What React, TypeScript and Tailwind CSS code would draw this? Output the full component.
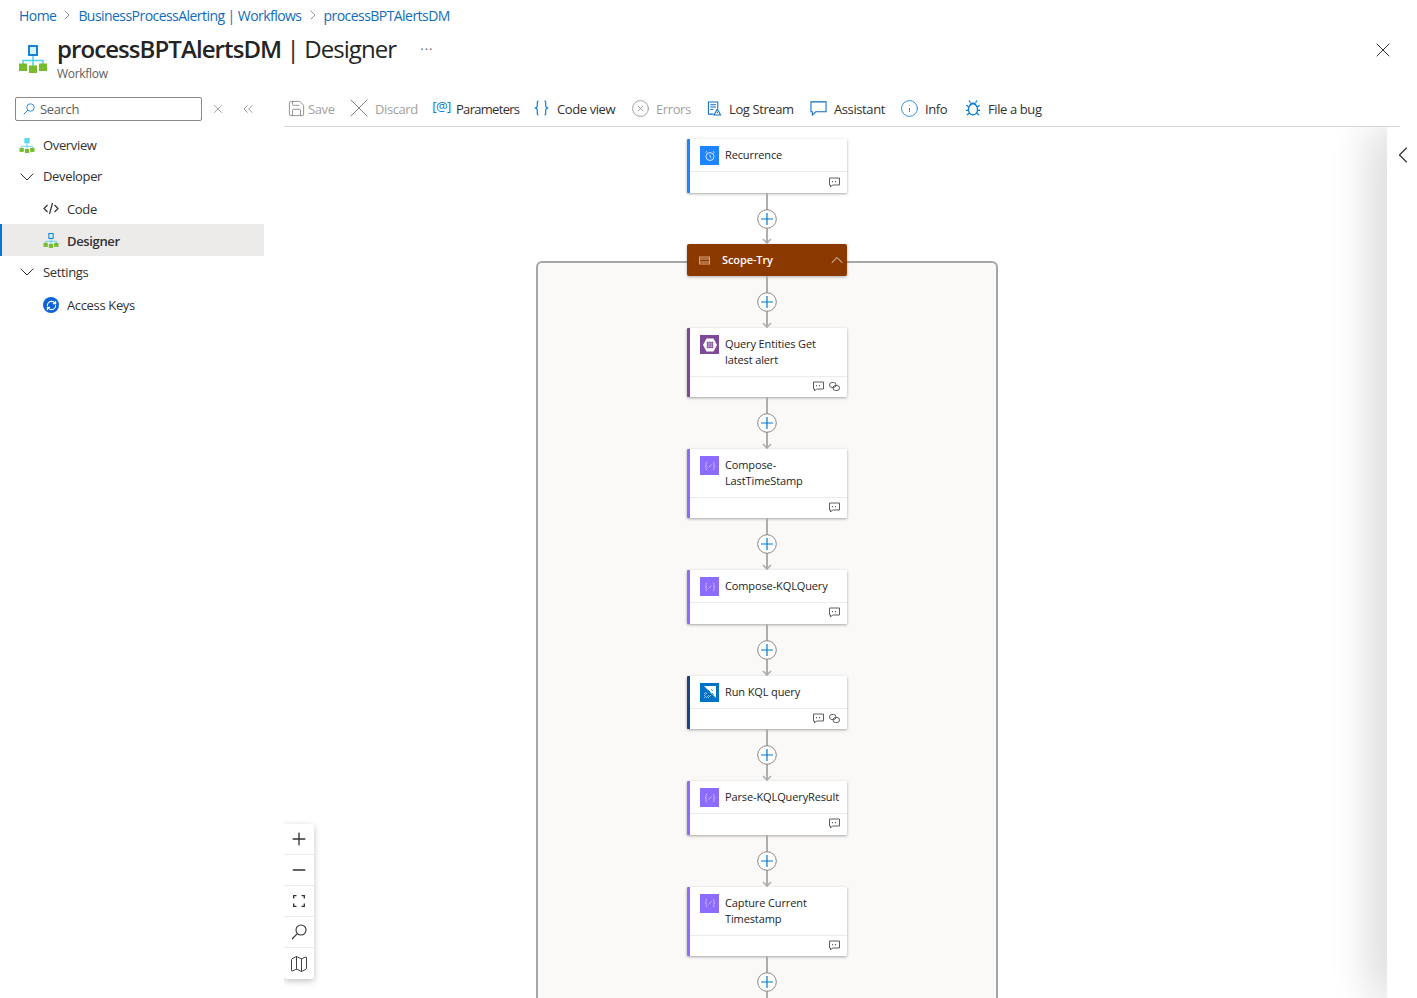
import { ChevronDown, ChevronLeft, ChevronRight, ChevronUp, ChevronsLeft, CircleX, Info, Map as MapIcon, Minus, Plus, RefreshCw, Save, X } from 'lucide-react'

const font = { fontFamily: '"Open Sans", "Noto Sans", sans-serif' }

function WorkflowIcon({ size = 30, filled = false }: { size?: number; filled?: boolean }) {
  return (
    <svg width={size} height={size} viewBox="0 0 30 30" fill="none">
      <path d="M15 11v11M5 20v-3.500h20V20" stroke="#50d4f2" strokeWidth="1.600" />
      {filled ? (
        <rect x="10" y="1" width="10" height="10" fill="#5ad8f5" />
      ) : (
        <rect x="11" y="2" width="8" height="9" fill="#d8f3fb" stroke="#0078d4" strokeWidth="1.800" />
      )}
      <rect x="1" y="19.500" width="8" height="7.500" fill="#76bc2d" />
      <rect x="11" y="21.500" width="8" height="7.500" fill="#76bc2d" />
      <rect x="21" y="19.500" width="8" height="7.500" fill="#76bc2d" />
    </svg>
  )
}

function SearchGlyph({ size, className }: { size: number; className?: string }) {
  return (
    <svg width={size} height={size} viewBox="0 0 16 16" fill="none" stroke="currentColor" strokeWidth="1.100" className={className}>
      <circle cx="10" cy="6" r="5" />
      <path d="M6.400 9.600L1 15" />
    </svg>
  )
}

function BraceIcon() {
  return (
    <svg width="16" height="18" viewBox="0 0 16 18" fill="none" stroke="#0078d4" strokeWidth="1.200">
      <path d="M5 1.500C3 1.500 3.500 3 3.500 5.500S3.500 8 1.500 9c2 1 2 1 2 3.500s-.5 4 1.500 4" />
      <path d="M11 1.500c2 0 1.500 1.500 1.500 4s0 2.500 2 3.500c-2 1-2 1-2 3.500s.5 4-1.500 4" />
    </svg>
  )
}

function LogStreamIcon() {
  return (
    <svg width="16" height="17" viewBox="0 0 16 17" fill="none" stroke="#0f6cbd" strokeWidth="1.100">
      <path d="M1.500 14.500v-13h10v7" />
      <path d="M1.500 14.500H7M3.500 4.500h6M3.500 7h6M3.500 9.500h3" />
      <path d="M11 9l-3.500 6.500h7z" />
      <path d="M11 12v1.500" />
    </svg>
  )
}

function BubbleIcon() {
  return (
    <svg width="18" height="17" viewBox="0 0 18 17" fill="none" stroke="#0f6cbd" strokeWidth="1.100">
      <path d="M1 1.500h16v10.500H6l-3.500 3.500V12H1z" />
    </svg>
  )
}

function BugIcon() {
  return (
    <svg width="17" height="18" viewBox="0 0 17 18" fill="none" stroke="#0078d4" strokeWidth="1.300">
      <ellipse cx="8.500" cy="10.500" rx="4.800" ry="5.800" />
      <path d="M5.200 6.300a3.400 3.400 0 0 1 6.600 0" />
      <path d="M5.800 3.400L4.300 1M11.200 3.400L12.700 1" />
      <path d="M4 8L1.500 6M13 8l2.500-2M3.700 11.500H1M13.300 11.500H16M4.500 14.500L2 16.500M12.500 14.500l2.500 2" />
    </svg>
  )
}

function CommentIcon() {
  return (
    <svg width="11" height="11" viewBox="0 0 11 11" fill="none">
      <path d="M.5 1h10v7H3.500L1.500 10V8H.5z" stroke="#605e5c" strokeWidth="1" />
      <path d="M3.500 4v1.200M6.500 4v1.200" stroke="#605e5c" strokeWidth="1.100" />
    </svg>
  )
}

function LinkIcon() {
  return (
    <svg width="11" height="9" viewBox="0 0 11 9" fill="none" stroke="#605e5c" strokeWidth="1">
      <rect x=".5" y=".5" width="6.500" height="5" rx="2.500" />
      <rect x="4" y="3.500" width="6.500" height="5" rx="2.500" />
    </svg>
  )
}

function Connector({ short }: { short?: boolean }) {
  const h = short ? 51 : 52
  return (
    <svg width="24" height={h} viewBox={`0 0 24 ${h}`} fill="none" className="block shrink-0">
      <path d={`M12 0v${h - 1}`} stroke="#aeadac" strokeWidth="2" />
      <path d={`M8 ${h - 5}l4 4 4-4`} stroke="#aeadac" strokeWidth="1.600" />
      <circle cx="12" cy="26" r="9.300" fill="#ffffff" stroke="#8a8886" strokeWidth="1" />
      <path d="M12 20v12M6 26h12" stroke="#0078d4" strokeWidth="1.200" />
    </svg>
  )
}

function RecurrenceGlyph() {
  return (
    <svg width="12" height="12" viewBox="0 0 12 12" fill="none" stroke="#ffffff" strokeWidth=".9" opacity=".9">
      <circle cx="6" cy="6.500" r="4" />
      <path d="M6 4.500v2.200l1.300.8M1.500 2.500l1.500-1.200M10.500 2.500L9 1.300" />
    </svg>
  )
}

function TableGlyph() {
  return (
    <svg width="16" height="16" viewBox="0 0 16 16">
      <path d="M4.500 1.500h7L15 8l-3.500 6.500h-7L1 8z" fill="#ffffff" />
      <rect x="4.800" y="4.800" width="6.400" height="6.400" fill="#804998" />
      <path d="M6.900 4.800v6.400M9.100 4.800v6.400M4.800 6.900h6.400M4.800 9.100h6.400" stroke="#ffffff" strokeWidth=".4" />
    </svg>
  )
}

function ComposeGlyph() {
  return (
    <svg width="12" height="12" viewBox="0 0 12 12" fill="none" stroke="#ffffff" strokeWidth=".8" opacity=".65">
      <path d="M3 2C1.800 2 2.200 3.200 2.200 4.500S1.800 6 1 6c.8 0 1.200.2 1.200 1.500S1.800 10 3 10" />
      <path d="M9 2c1.200 0 .8 1.200.8 2.500S10.200 6 11 6c-.8 0-1.200.2-1.200 1.500S10.200 10 9 10" />
      <path d="M4.500 7.500L7.500 4.500" />
    </svg>
  )
}

function KqlGlyph() {
  return (
    <svg width="16" height="16" viewBox="0 0 16 16" fill="none">
      <path d="M2 2h12v12z" fill="#ffffff" />
      <path d="M6 6l2 2M9 5l2 2M10 9l2 2" stroke="#0072c6" strokeWidth=".7" />
      <path d="M2 14l2-2M4 14l3-3M2 12l3-3M6 14l3-3M2 10l2-2" stroke="#ffffff" strokeWidth=".8" opacity=".7" />
    </svg>
  )
}

function Card({
  lines,
  bar,
  tile,
  glyph,
  link,
  height,
}: {
  lines: string[]
  bar: string
  tile: string
  glyph: React.ReactNode
  link?: boolean
  height?: string
}) {
  const two = lines.length > 1
  return (
    <div
      className={`w-[160px] shrink-0 flex flex-col bg-white border-l-[3px] rounded-[1px] shadow-[0_1px_3px_rgba(0,0,0,0.35)] ${height ?? (two ? 'h-[69px]' : 'h-[53.5px]')}`}
      style={{ borderLeftColor: bar }}
    >
      <div className={`flex gap-[6px] pl-[10px] pt-[7px] border-b border-[#edebe9] shrink-0 ${two ? 'h-[49px]' : 'h-[33px]'}`}>
        <div className="w-[19px] h-[19px] shrink-0 flex items-center justify-center" style={{ backgroundColor: tile }}>
          {glyph}
        </div>
        <div className="text-[11px] font-medium leading-[16px] tracking-[-0.12px] text-[#242424] whitespace-nowrap pt-px">
          {lines.map((l) => (
            <div key={l}>{l}</div>
          ))}
        </div>
      </div>
      <div className="flex-1 flex items-center justify-end gap-[5px] pr-[7px] pb-px">
        <CommentIcon />
        {link && <LinkIcon />}
      </div>
    </div>
  )
}

function ToolItem({
  icon,
  label,
  off,
  width,
  box,
  gap,
  tight,
}: {
  icon: React.ReactNode
  label: string
  off?: boolean
  width: string
  box: string
  gap: string
  tight?: boolean
}) {
  return (
    <div className={`flex items-center shrink-0 ${width} ${gap}`}>
      <span className={`flex items-center justify-center shrink-0 -mt-px ${box}`}>{icon}</span>
      <span className={`pt-[3px] ${tight ? 'tracking-[-0.7px]' : ''} ${off ? 'text-[#a19f9d]' : 'text-[#323130]'}`}>{label}</span>
    </div>
  )
}

function TreeRow({
  icon,
  label,
  indent,
  active,
  h = 'h-8',
  nudge = 'pt-[2px]',
}: {
  icon: React.ReactNode
  label: string
  indent?: boolean
  active?: boolean
  h?: string
  nudge?: string
}) {
  return (
    <div
      className={`flex items-center gap-2 ${h} ${indent ? 'pl-[43px]' : 'pl-[19px]'} ${
        active ? 'bg-[#edebe9] border-l-2 border-[#0078d4] !pl-[41px] font-semibold' : ''
      }`}
    >
      <span className="w-4 h-4 flex items-center justify-center shrink-0">{icon}</span>
      <span className={`text-[13px] text-[#323130] ${nudge}`}>{label}</span>
    </div>
  )
}

const zoomBtn = 'h-[31px] flex items-center justify-center border-b border-[#edebe9] last:border-b-0'

export default function App() {
  return (
    <div className="h-[998px] w-[1417px] overflow-hidden flex flex-col bg-white text-[#323130]" style={font}>
      <div className="h-[32px] shrink-0 pl-[19px] pb-[2px] flex items-center gap-[3px] text-[14px] text-[#0f6cbd] tracking-[-0.55px]">
        <span>Home</span>
        <ChevronRight size={16} strokeWidth={1} className="text-[#605e5c]" />
        <span>BusinessProcessAlerting | Workflows</span>
        <ChevronRight size={16} strokeWidth={1} className="text-[#605e5c]" />
        <span>processBPTAlertsDM</span>
      </div>

      <div className="h-[59px] shrink-0 flex pl-[18px] pr-[22px]">
        <div className="pt-[12px] mr-[9px]">
          <WorkflowIcon />
        </div>
        <div className="-mt-px">
          <div className="flex items-center text-[24px] leading-[28px] tracking-[-0.92px] text-[#242424]">
            <span className="font-semibold">processBPTAlertsDM</span>
            <span className="font-normal">&nbsp;| Designer</span>
            <span className="text-[13px] tracking-[1px] ml-[24px] mb-2 text-[#605e5c]">...</span>
          </div>
          <div className="text-[12px] leading-[16px] tracking-[-0.3px] text-[#605e5c] -mt-px">Workflow</div>
        </div>
        <div className="ml-auto pt-[6px]">
          <X size={24} strokeWidth={1} className="text-[#323130]" />
        </div>
      </div>

      <div className="flex-1 flex min-h-0">
        <aside className="w-[264px] shrink-0 pt-[6px] tracking-[-0.35px]">
          <div className="flex items-center pl-[15px]">
            <div className="w-[187px] h-6 border border-[#8a8886] rounded-[2px] flex items-center gap-[5px] pl-[7px] text-[13px] text-[#605e5c]">
              <SearchGlyph size={12} className="text-[#0078d4]" />
              <span className="pt-px">Search</span>
            </div>
            <X size={14} strokeWidth={1} className="ml-[9px] text-[#605e5c]" />
            <ChevronsLeft size={16} strokeWidth={1} className="ml-[15px] text-[#605e5c]" />
          </div>
          <nav className="mt-2">
            <TreeRow label="Overview" icon={<WorkflowIcon size={17} filled />} />
            <TreeRow
              label="Developer"
              h="h-[31px]"
              nudge=""
              icon={<ChevronDown size={24} strokeWidth={1} className="text-[#323130] shrink-0" />}
            />
            <TreeRow
              label="Code"
              indent
              nudge="pt-[4px]"
              icon={
                <svg width="16" height="13" viewBox="0 0 16 13" fill="none" stroke="#323130" strokeWidth="1.200">
                  <path d="M4.500 3L1 6.500 4.500 10M11.500 3L15 6.500 11.500 10M9.500 1L6.500 12" />
                </svg>
              }
            />
            <TreeRow label="Designer" indent active nudge="pt-[4px]" icon={<WorkflowIcon size={17} />} />
            <TreeRow label="Settings" icon={<ChevronDown size={24} strokeWidth={1} className="text-[#323130] shrink-0" />} />
            <div className="mt-px">
              <TreeRow
                label="Access Keys"
                indent
                icon={
                  <span className="w-4 h-4 rounded-full bg-[#0f62d6] flex items-center justify-center">
                    <RefreshCw size={11} strokeWidth={2.5} className="text-white" />
                  </span>
                }
              />
            </div>
          </nav>
        </aside>

        <main className="flex-1 min-w-0 flex flex-col pl-5">
          <div className="h-9 shrink-0 mr-[17px] pl-[3px] flex items-center border-b border-[#d6d6d6] text-[13px] tracking-[-0.4px]">
            <ToolItem off label="Save" width="w-[64px]" box="w-[19px]" gap="gap-[2px]" icon={<Save size={19} strokeWidth={1} className="text-[#797775]" />} />
            <ToolItem off label="Discard" width="w-[82px]" box="w-4" gap="gap-2" icon={<X size={32} strokeWidth={0.7} className="text-[#797775] shrink-0" />} />
            <ToolItem
              label="Parameters"
              tight
              width="w-[101px]"
              box="w-[17px]"
              gap="gap-[6px]"
              icon={<span className="text-[13px] leading-none text-[#0078d4] tracking-[-0.5px] -mt-[4px]">[@]</span>}
            />
            <ToolItem label="Code view" width="w-[98px]" box="w-[15px]" gap="gap-2" icon={<BraceIcon />} />
            <ToolItem off label="Errors" width="w-[75px]" box="w-[17px]" gap="gap-[7px]" icon={<CircleX size={19} strokeWidth={1} className="text-[#8a8886] shrink-0" />} />
            <ToolItem label="Log Stream" width="w-[103px]" box="w-[15px]" gap="gap-[7px]" icon={<LogStreamIcon />} />
            <ToolItem label="Assistant" width="w-[91px]" box="w-[17px]" gap="gap-[7px]" icon={<BubbleIcon />} />
            <ToolItem label="Info" width="w-[64px]" box="w-4" gap="gap-2" icon={<Info size={19} strokeWidth={1} className="text-[#0078d4] shrink-0" />} />
            <ToolItem label="File a bug" width="w-[80px]" box="w-4" gap="gap-[7px]" icon={<BugIcon />} />
          </div>

          <div className="flex-1 min-h-0 flex overflow-hidden">
            <div className="relative flex-1 min-w-0">
              <div className="ml-[252px] w-[462px] pt-3 flex flex-col items-center">
                <Card lines={['Recurrence']} bar="#1f85ff" tile="#1f85ff" glyph={<RecurrenceGlyph />} height="h-[54px]" />
                <Connector short />
                <div className="mt-[16.5px] w-full border-2 border-[#a8a6a4] rounded-[6px] bg-[#faf9f8] flex flex-col items-center pb-10">
                  <div className="-mt-[18.5px] w-[160px] h-[32px] shrink-0 rounded-[2px] bg-[#8c3900] flex items-center pl-[12px] shadow-[0_1px_3px_rgba(0,0,0,0.3)]">
                    <svg width="11" height="9" viewBox="0 0 11 9" fill="none" stroke="#d9a77f" strokeWidth="1">
                      <rect x=".5" y="1" width="10" height="7" />
                      <path d="M.5 3h10M.5 6h10" />
                    </svg>
                    <span className="ml-[12px] text-[11px] font-semibold tracking-[-0.1px] text-white">Scope-Try</span>
                    <ChevronUp size={20} strokeWidth={1} className="ml-auto text-white" />
                  </div>
                  <Connector />
                  <Card lines={['Query Entities Get', 'latest alert']} bar="#804998" tile="#804998" glyph={<TableGlyph />} link />
                  <Connector />
                  <Card lines={['Compose-', 'LastTimeStamp']} bar="#8c6cff" tile="#8c6cff" glyph={<ComposeGlyph />} />
                  <Connector />
                  <Card lines={['Compose-KQLQuery']} bar="#8c6cff" tile="#8c6cff" glyph={<ComposeGlyph />} />
                  <Connector />
                  <Card lines={['Run KQL query']} bar="#1a4480" tile="#0072c6" glyph={<KqlGlyph />} link />
                  <Connector />
                  <Card lines={['Parse-KQLQueryResult']} bar="#8c6cff" tile="#8c6cff" glyph={<ComposeGlyph />} />
                  <Connector />
                  <Card lines={['Capture Current', 'Timestamp']} bar="#8c6cff" tile="#8c6cff" glyph={<ComposeGlyph />} />
                  <Connector />
                </div>
              </div>

              {/* zoom controls float over the canvas */}
              <div className="absolute left-0 bottom-[19px] w-[30px] rounded-[3px] bg-white shadow-[0_2px_6px_rgba(0,0,0,0.25)] text-[#323130]">
                <div className={zoomBtn}><Plus size={20} strokeWidth={1.6} /></div>
                <div className={zoomBtn}><Minus size={20} strokeWidth={1.6} /></div>
                <div className={zoomBtn}>
                  <svg width="12" height="12" viewBox="0 0 12 12" fill="none" stroke="#323130" strokeWidth="1.300">
                    <path d="M.7 3.500V.7h2.800M8.500.7h2.800v2.800M11.300 8.500v2.800H8.500M3.500 11.300H.7V8.500" />
                  </svg>
                </div>
                <div className={zoomBtn}><SearchGlyph size={16} /></div>
                <div className={zoomBtn}><MapIcon size={20} strokeWidth={1.1} /></div>
              </div>
            </div>

            <div className="relative w-[30px] shrink-0 bg-white pt-[14px] pl-[2px] shadow-[-10px_0_45px_rgba(0,0,0,0.22)]">
              <ChevronLeft size={28} strokeWidth={1} className="text-[#323130]" />
            </div>
          </div>
        </main>
      </div>
    </div>
  )
}
